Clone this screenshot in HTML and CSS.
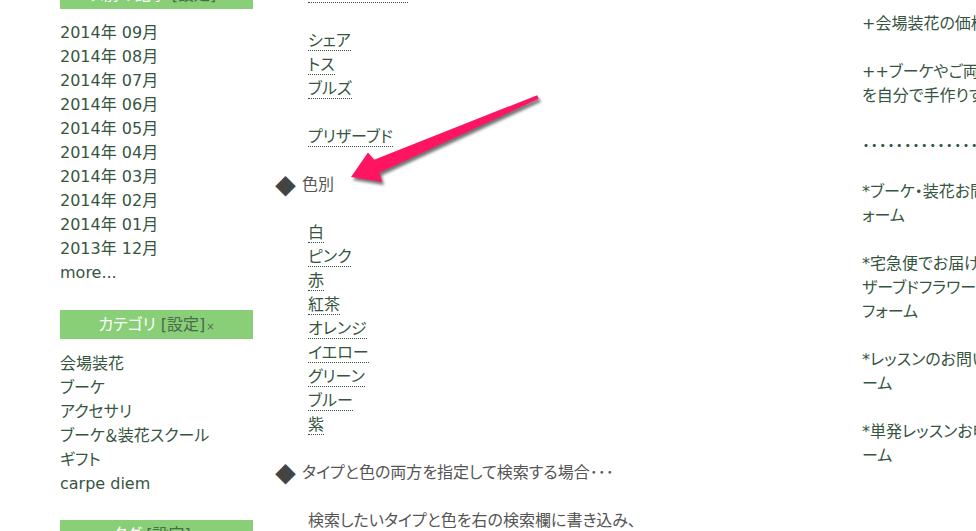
FILE: index.html
```html
<!DOCTYPE html>
<html lang="ja">
<head>
<meta charset="utf-8">
<title>ブログ</title>
<link rel="stylesheet" href="styles.css">
</head>
<body>
<div class="page">
  <aside class="side">
    <section class="widget">
      <h3 class="wh">以前の記事 <span class="set">[設定]</span><span class="x">×</span></h3>
      <ul class="wl arch">
        <li>2014年 09月</li>
        <li>2014年 08月</li>
        <li>2014年 07月</li>
        <li>2014年 06月</li>
        <li>2014年 05月</li>
        <li>2014年 04月</li>
        <li>2014年 03月</li>
        <li>2014年 02月</li>
        <li>2014年 01月</li>
        <li>2013年 12月</li>
        <li>more...</li>
      </ul>
    </section>
    <section class="widget">
      <h3 class="wh">カテゴリ <span class="set">[設定]</span><span class="x">×</span></h3>
      <ul class="wl cat">
        <li>会場装花</li>
        <li>ブーケ</li>
        <li>アクセサリ</li>
        <li>ブーケ＆装花スクール</li>
        <li>ギフト</li>
        <li>carpe diem</li>
      </ul>
    </section>
    <section class="widget">
      <h3 class="wh">タグ <span class="set">[設定]</span><span class="x">×</span></h3>
    </section>
  </aside>

  <main class="main">
    <ul class="links">
      <li><a href="#">ラウンドブーケ</a></li>
    </ul>
    <ul class="links gap">
      <li><a href="#">シェア</a></li>
      <li><a href="#">トス</a></li>
      <li><a href="#">ブルズ</a></li>
    </ul>
    <ul class="links gap">
      <li><a href="#">プリザーブド</a></li>
    </ul>
    <h4 class="hd gap"><span class="dia">◆</span>色別</h4>
    <ul class="links gap">
      <li><a href="#">白</a></li>
      <li><a href="#">ピンク</a></li>
      <li><a href="#">赤</a></li>
      <li><a href="#">紅茶</a></li>
      <li><a href="#">オレンジ</a></li>
      <li><a href="#">イエロー</a></li>
      <li><a href="#">グリーン</a></li>
      <li><a href="#">ブルー</a></li>
      <li><a href="#">紫</a></li>
    </ul>
    <h4 class="hd gap"><span class="dia">◆</span>タイプと色の両方を指定して検索する場合･･･</h4>
    <p class="desc gap">検索したいタイプと色を右の検索欄に書き込み、</p>
  </main>

  <aside class="right">
    <p>+会場装花の価格表はこちら</p>
    <p>++ブーケやご両親への花束<br>を自分で手作りするレッスン</p>
    <p class="dots">･････････････････</p>
    <p>*ブーケ・装花お問い合わせフ<br>ォーム</p>
    <p>*宅急便でお届けするプリ<br>ザーブドフラワーのご注文<br>フォーム</p>
    <p>*レッスンのお問い合わせフォ<br>ーム</p>
    <p>*単発レッスンお申し込みフォ<br>ーム</p>
  </aside>
</div>

<svg class="arrow" width="976" height="531" viewBox="0 0 976 531" aria-hidden="true">
  <polygon points="351,177 368,152.5 374.1,159.7 537.2,95.2 538.8,98.8 379.5,172.5 382,182" />
</svg>
</body>
</html>
```

FILE: styles.css
```css
* {
  box-sizing: border-box;
  margin: 0;
  padding: 0;
}

html,
body {
  width: 976px;
  height: 531px;
  overflow: hidden;
  background: #ffffff;
}

body {
  position: relative;
  font-family: "DejaVu Sans", "Noto Sans CJK JP", sans-serif;
  font-size: 16px;
  line-height: 24px;
  color: #36553f;
  font-feature-settings: "palt";
}

.page {
  display: flex;
  align-items: flex-start;
  padding-left: 60px;
}

/* sidebar */
.side {
  flex: none;
  width: 193px;
  margin-top: -20px;
}

.wh {
  height: 29px;
  line-height: 29px;
  background: #88cf78;
  color: #ffffff;
  text-align: center;
  font-weight: normal;
  font-size: 16px;
}

.set {
  color: #4b6a4b;
}

.x {
  font-size: 10px;
  color: #5d6d5d;
  margin-left: 1px;
}

.wl {
  list-style: none;
}

.wl li {
  padding-top: 1px;
  height: 24px;
}

.arch {
  padding: 11px 0 26px;
}

.cat {
  padding: 12px 0 25px;
}

/* main column */
.main {
  flex: none;
  width: 586px;
  margin-left: 23px;
  margin-top: -19px;
}

.gap {
  margin-top: 24px;
}

.links {
  list-style: none;
  padding-left: 32px;
}

.links li {
  height: 24px;
}

.links a {
  color: #36553f;
  text-decoration: none;
  border-bottom: 1px dotted #36553f;
}

.hd {
  display: flex;
  align-items: center;
  height: 24px;
  font-weight: normal;
  font-size: 16px;
  color: #555555;
}

.dia {
  width: 26px;
  margin-left: -1px;
  margin-right: 1px;
  color: #444444;
  font-family: "Noto Sans CJK JP", sans-serif;
  font-size: 21px;
  line-height: 24px;
  font-feature-settings: normal;
}

.desc {
  padding-left: 32px;
  color: #555555;
  white-space: nowrap;
}

/* right column */
.right {
  flex: none;
  width: 300px;
  margin-top: 12px;
  white-space: nowrap;
}

.right p + p {
  margin-top: 24px;
}

.dots {
  font-family: "Noto Sans CJK JP", sans-serif;
  letter-spacing: 0.33px;
  font-weight: bold;
}

/* annotation arrow overlay */
.arrow {
  position: absolute;
  left: 0;
  top: 0;
  pointer-events: none;
  fill: #ff1462;
  filter: drop-shadow(2px 3px 1.5px rgba(0, 0, 0, 0.55));
}
```
